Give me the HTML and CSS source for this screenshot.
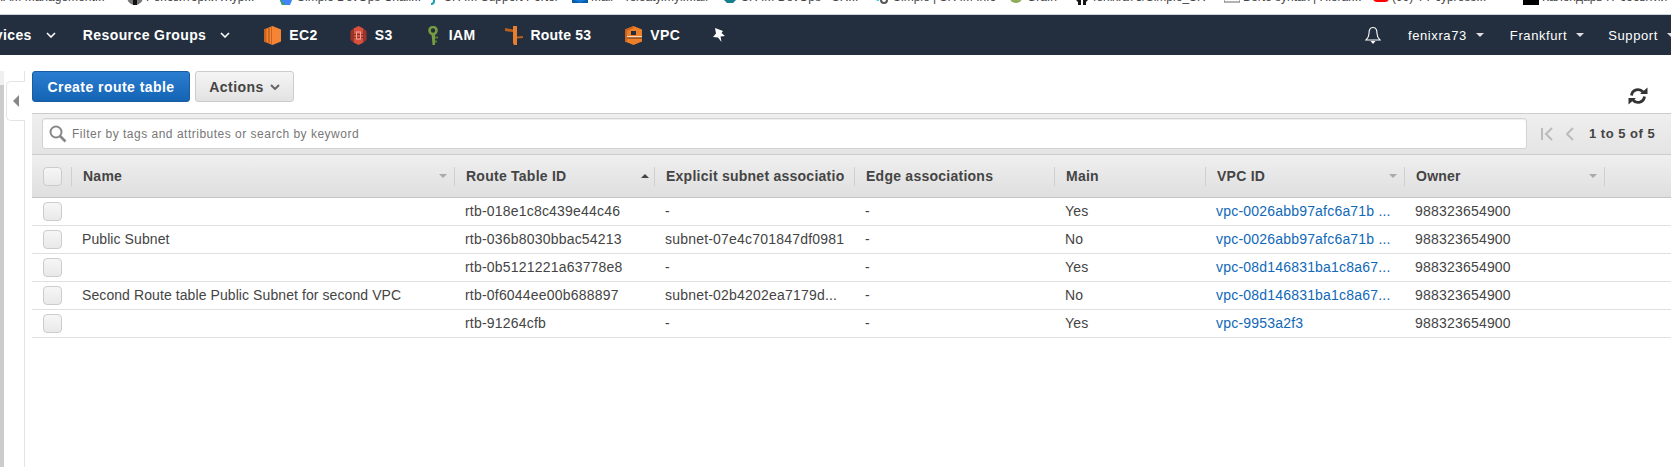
FILE: index.html
```html
<!DOCTYPE html>
<html lang="en">
<head>
<meta charset="utf-8">
<title>Route Tables</title>
<link rel="stylesheet" href="styles.css">
</head>
<body>
<div class="bookmarks">
  <div class="bm"><span class="bm-text">IAM Management...</span></div>
  <div class="bm"><svg class="bm-icon" viewBox="0 0 16 16"><circle cx="8" cy="8" r="8" fill="#777"/><path d="M8 5v11" stroke="#111" stroke-width="4"/></svg><span class="bm-text">Репозиторий Жур...</span></div>
  <div class="bm"><svg class="bm-icon" viewBox="0 0 16 16"><path d="M1 9h14l-3 7H4z" fill="#4285f4"/><path d="M1 9l3 7h3z" fill="#34a853"/></svg><span class="bm-text">Simple DevOps Chall...</span></div>
  <div class="bm"><svg class="bm-icon" viewBox="0 0 16 16"><path d="M9 2v10q0 3-3 3" fill="none" stroke="#1a9fb5" stroke-width="2"/></svg><span class="bm-text">SR IM Support Porter</span></div>
  <div class="bm"><svg class="bm-icon" viewBox="0 0 16 16"><rect y="1" width="16" height="13" fill="#0f78d4"/><path d="M0 10l8 4 8-4v4H0z" fill="#0b5aa8"/></svg><span class="bm-text">Mail - Teleaty.myl.Mail</span></div>
  <div class="bm"><svg class="bm-icon" viewBox="0 0 16 16"><path d="M0 0h16v9l-5 5H5l-5-5z" fill="#14808c"/></svg><span class="bm-text">SR IM DevOps - SR...</span></div>
  <div class="bm"><svg class="bm-icon" viewBox="0 0 16 16"><circle cx="10" cy="11" r="3" fill="none" stroke="#555" stroke-width="2"/><path d="M0 8q2 3 5 3" stroke="#39bcd6" stroke-width="2" fill="none"/></svg><span class="bm-text">Simple | SR IM Info</span></div>
  <div class="bm"><svg class="bm-icon" viewBox="0 0 16 16"><path d="M1 4h14q0 10-7 10T1 4z" fill="#8fae5d"/></svg><span class="bm-text">Grafn</span></div>
  <div class="bm"><svg class="bm-icon" viewBox="0 0 16 16"><path d="M1 6h14q0 5-3 7v3H9V8H7v8H4v-3Q1 11 1 6z" fill="#151515"/></svg><span class="bm-text">fenixra73/Simple_SR</span></div>
  <div class="bm"><svg class="bm-icon" viewBox="0 0 16 16"><path d="M0 2v11h16V2" fill="none" stroke="#666" stroke-width="1"/></svg><span class="bm-text">Berte syntax | Hierar...</span></div>
  <div class="bm"><svg class="bm-icon" viewBox="0 0 16 16"><rect y="0" width="16" height="13" rx="4" fill="#f00"/></svg><span class="bm-text">(99) YT cypress...</span></div>
  <div class="bm"><svg class="bm-icon" viewBox="0 0 16 16"><rect width="16" height="16" fill="#000"/></svg><span class="bm-text">Календарь IT-событий</span></div>
</div>

<nav class="nav">
  <div class="nav-main">
    <span class="nav-item nav-services">Services<svg class="chev" viewBox="0 0 10 6"><path d="M1 1l4 4 4-4" fill="none" stroke="#fff" stroke-width="1.6"/></svg></span>
    <span class="nav-item nav-groups">Resource Groups<svg class="chev" viewBox="0 0 10 6"><path d="M1 1l4 4 4-4" fill="none" stroke="#fff" stroke-width="1.6"/></svg></span>
    <span class="nav-item nav-ec2">
      <svg class="svc" viewBox="0 0 17 19"><path d="M8.500 0L17 3.500v12L8.500 19 0 15.500v-12z" fill="#f58534"/><path d="M0 3.500L2.500 2.500v14L0 15.500zM4 2l1.800-.8v16.600L4 17zM7 .7L8 .2v18.600l-1-.5z" fill="#c9641e"/></svg>EC2</span>
    <span class="nav-item nav-s3">
      <svg class="svc" viewBox="0 0 16 19"><path d="M3 2.500L8 0l5 2.500V16.500L8 19l-5-2.500z" fill="#d9503f"/><path d="M0 5l3-2.500v14L0 14zM13 2.500L16 5v9l-3 2.500z" fill="#9c3527"/><path d="M3 8h10v1H3zM3 11h10v1H3z" fill="#8c3123"/><rect x="6" y="6" width="4" height="7" fill="none" stroke="#f0a79d" stroke-width="1"/></svg>S3</span>
    <span class="nav-item nav-iam">
      <svg class="svc svc-key" viewBox="0 0 12 19"><circle cx="6" cy="4.500" r="3.500" fill="none" stroke="#759c3e" stroke-width="2.600"/><path d="M4.500 7.500h3.500v11.500H5.500z" fill="#759c3e"/><path d="M8 10.500h3v2H8zM8 14.500h2v2H8z" fill="#5b7a2f"/></svg>IAM</span>
    <span class="nav-item nav-r53">
      <svg class="svc svc-route" viewBox="0 0 18 19"><path d="M8 0h4v19H9L8 17z" fill="#e97f2e"/><path d="M0 2l8 1.500v2.500L0 5zM12 10.500l6-.5v2l-6 .5z" fill="#b85f1f"/></svg>Route 53</span>
    <span class="nav-item nav-vpc">
      <svg class="svc" viewBox="0 0 17 19"><path d="M8.500 0L17 3.500v12L8.500 19 0 15.500v-12z" fill="#ee7f2a"/><path d="M0 10h17v1.500H0z" fill="#fbd9b8"/><path d="M0 12h17" stroke="#5a3116"/><path d="M6 9V5h5v4" fill="#232f3e"/><path d="M0 3.500L8.500 0v2L2 5v10.300L0 15.500z" fill="#c9641e"/></svg>VPC</span>
    <svg class="pin" viewBox="0 0 12 14"><path d="M2 0l8 3-1.500 2L12 8 7.500 8.500 8.500 14 5 9.500 0 9 3 5.500z" fill="#fff"/></svg>
  </div>
  <div class="nav-right">
    <svg class="bell" viewBox="0 0 16 18"><path d="M8 1.500C4.500 1.500 4 4.500 4 7.500c0 3-1 4.500-3 6.500h14c-2-2-3-3.500-3-6.500 0-3-.5-6-4-6z" fill="none" stroke="#fff" stroke-width="1.100"/><path d="M5.500 15h5L8 18z" fill="#fff"/></svg>
    <span class="nav-link nav-user">fenixra73<i class="caret"></i></span>
    <span class="nav-link nav-region">Frankfurt<i class="caret"></i></span>
    <span class="nav-link nav-support">Support<i class="caret"></i></span>
  </div>
</nav>

<div class="page">
  <aside class="rail">
    <div class="strip"></div>
    <div class="tab"><i class="tab-arrow"></i></div>
  </aside>
  <main class="content">
    <div class="actions">
      <button class="btn btn-primary" type="button">Create route table</button>
      <button class="btn btn-default" type="button">Actions<svg class="btn-chev" viewBox="0 0 10 6"><path d="M1 1l4 4 4-4" fill="none" stroke="#666" stroke-width="2"/></svg></button>
      <svg class="refresh" viewBox="0 0 20 18"><path d="M3.500 8.500A6.500 6.500 0 0 1 15 5" fill="none" stroke="#333" stroke-width="2.800"/><path d="M12 7h7.500V.5z" fill="#333"/><path d="M16.500 9.500A6.500 6.500 0 0 1 5 13" fill="none" stroke="#333" stroke-width="2.800"/><path d="M8 11H.5v6.500z" fill="#333"/></svg>
    </div>
    <div class="filter-bar">
      <div class="search">
        <svg class="search-icon" viewBox="0 0 18 18"><circle cx="7" cy="7" r="5.500" fill="none" stroke="#888" stroke-width="2"/><path d="M11 11l5.500 5.500" stroke="#888" stroke-width="2.600"/></svg>
        <span class="search-text">Filter by tags and attributes or search by keyword</span>
      </div>
      <div class="pager">
        <svg class="pager-icon" viewBox="0 0 12 14"><path d="M1 1v12M11 1L5 7l6 6" fill="none" stroke="#bbb" stroke-width="2"/></svg>
        <svg class="pager-icon pager-prev" viewBox="0 0 8 14"><path d="M7 1L1 7l6 6" fill="none" stroke="#bbb" stroke-width="2"/></svg>
        <span class="pager-text">1 to 5 of 5</span>
      </div>
    </div>
    <table class="grid">
      <thead>
        <tr>
          <th class="c-check"><div class="th-in th-check"><span class="box"></span></div></th>
          <th class="c-name"><div class="th-in"><span>Name</span><i class="sort"></i></div></th>
          <th class="c-id"><div class="th-in"><span>Route Table ID</span><i class="sort sort-up"></i></div></th>
          <th class="c-id"><div class="th-in"><span>Explicit subnet associatio</span></div></th>
          <th class="c-id"><div class="th-in"><span>Edge associations</span></div></th>
          <th class="c-main"><div class="th-in"><span>Main</span></div></th>
          <th class="c-vpc"><div class="th-in"><span>VPC ID</span><i class="sort"></i></div></th>
          <th class="c-id"><div class="th-in"><span>Owner</span><i class="sort"></i></div></th>
          <th class="c-rest"></th>
        </tr>
      </thead>
      <tbody>
        <tr><td class="cell-check"><span class="box"></span></td><td class="cell-name"></td><td>rtb-018e1c8c439e44c46</td><td>-</td><td>-</td><td>Yes</td><td><a class="link">vpc-0026abb97afc6a71b ...</a></td><td>988323654900</td><td></td></tr>
        <tr><td class="cell-check"><span class="box"></span></td><td class="cell-name">Public Subnet</td><td>rtb-036b8030bbac54213</td><td>subnet-07e4c701847df0981</td><td>-</td><td>No</td><td><a class="link">vpc-0026abb97afc6a71b ...</a></td><td>988323654900</td><td></td></tr>
        <tr><td class="cell-check"><span class="box"></span></td><td class="cell-name"></td><td>rtb-0b5121221a63778e8</td><td>-</td><td>-</td><td>Yes</td><td><a class="link">vpc-08d146831ba1c8a67...</a></td><td>988323654900</td><td></td></tr>
        <tr><td class="cell-check"><span class="box"></span></td><td class="cell-name">Second Route table Public Subnet for second VPC</td><td>rtb-0f6044ee00b688897</td><td>subnet-02b4202ea7179d...</td><td>-</td><td>No</td><td><a class="link">vpc-08d146831ba1c8a67...</a></td><td>988323654900</td><td></td></tr>
        <tr><td class="cell-check"><span class="box"></span></td><td class="cell-name"></td><td>rtb-91264cfb</td><td>-</td><td>-</td><td>Yes</td><td><a class="link">vpc-9953a2f3</a></td><td>988323654900</td><td></td></tr>
      </tbody>
    </table>
  </main>
</div>
</body>
</html>
```
FILE: styles.css
```css
* { box-sizing: border-box; }
html, body { margin: 0; height: 100%; overflow: hidden; background: #fff; }
body { font-family: "Liberation Sans", Arial, sans-serif; font-size: 14px; color: #444; display: flex; flex-direction: column; }

/* bookmark strip, clipped by the screenshot's top edge */
.bookmarks {
  height: 15px; border-bottom: 1px solid #cbd2d8; overflow: hidden; flex: none;
  display: grid; align-items: start;
  grid-template-columns: 127px 151px 147px 147px 150px 152px 134px 66px 150px 149px 150px 1fr;
}
.bm { display: flex; align-items: flex-end; gap: 3px; height: 16px; margin-top: -11px; overflow: hidden; white-space: nowrap; }
.bm-icon { width: 16px; height: 16px; flex: none; }
.bm-text { font-size: 12px; line-height: 16px; color: #444; }

/* service bar */
.nav { height: 40px; flex: none; background: #232f3e; color: #fff; display: flex; align-items: center; overflow: hidden; }
.nav-main { display: flex; align-items: center; height: 100%; }
.nav-item { display: flex; align-items: center; font-weight: 700; letter-spacing: .4px; white-space: nowrap; }
.chev { width: 10px; height: 6px; margin-left: 14px; flex: none; }
.svc { width: 17px; height: 19px; margin-right: 8px; flex: none; }
.svc-key { width: 12px; margin-right: 10px; }
.svc-route { width: 18px; }
.nav-services { margin-left: -29px; }
.nav-groups { margin-left: 27px; }
.nav-ec2 { margin-left: 34px; }
.nav-s3 { margin-left: 32px; }
.nav-iam { margin-left: 34px; }
.nav-r53 { margin-left: 29px; letter-spacing: .2px; }
.nav-vpc { margin-left: 34px; }
.pin { width: 12px; height: 14px; margin-left: 33px; }
.nav-right { margin-left: auto; display: flex; align-items: center; margin-right: -4px; }
.bell { width: 16px; height: 18px; margin-right: 27px; }
.nav-link { font-size: 13px; letter-spacing: .6px; display: flex; align-items: center; white-space: nowrap; }
.nav-user { margin-right: 26px; }
.nav-region { margin-right: 24px; }
.caret { width: 0; height: 0; margin-left: 9px; border: 4px solid transparent; border-top: 4px solid #ddd; border-bottom: 0; }

/* page */
.page { flex: 1; display: flex; min-height: 0; }
.rail { width: 32px; flex: none; position: relative; padding-top: 16px; }
.strip { width: 4px; height: 100%; background: linear-gradient(#f0f0f0 0, #f0f0f0 14px, #ccc 14px); }
.rail::after { content: ""; position: absolute; left: 24px; top: 16px; bottom: 0; width: 1px; background: #e3e3e3; }
.tab { position: absolute; left: 6px; top: 26px; width: 19px; height: 40px; background: #fff; border: 1px solid #e3e3e3; border-right: 0; border-radius: 5px 0 0 5px; z-index: 1; display: flex; align-items: center; justify-content: center; }
.tab-arrow { border: 6px solid transparent; border-right: 6px solid #888; border-left: 0; }
.content { flex: 1; min-width: 0; display: flex; flex-direction: column; padding-top: 16px; }

.actions { height: 42px; flex: none; display: flex; align-items: flex-start; gap: 5px; }
.btn { height: 31px; border-radius: 3px; font: 700 14px "Liberation Sans", Arial, sans-serif; letter-spacing: .45px; display: flex; align-items: center; padding: 0; }
.btn-primary { width: 158px; justify-content: center; color: #fff; border: 1px solid #1a5c9e; background: linear-gradient(#2b7dd1, #1464b4); }
.btn-default { width: 99px; justify-content: center; color: #444; border: 1px solid #ccc; background: linear-gradient(#f5f5f5, #e2e2e2); }
.btn-chev { width: 10px; height: 6px; margin-left: 6px; }
.refresh { width: 20px; height: 18px; margin-left: auto; margin-right: 23px; margin-top: 16px; }

.filter-bar { height: 42px; flex: none; display: flex; align-items: flex-start; padding: 4px 0 0 10px; background: linear-gradient(#efefef, #e4e4e4); border-top: 1px solid #ccc; border-bottom: 1px solid #ccc; }
.search { width: 1485px; height: 31px; background: #fff; border: 1px solid #d3d3d3; border-radius: 3px; display: flex; align-items: center; padding-left: 6px; box-shadow: inset 0 1px 1px #eee; }
.search-icon { width: 18px; height: 18px; flex: none; margin-right: 5px; }
.search-text { font-size: 12px; letter-spacing: .5px; color: #777; padding-top: 1px; }
.pager { display: flex; align-items: center; height: 31px; padding-left: 14px; }
.pager-icon { width: 12px; height: 14px; }
.pager-prev { width: 8px; margin-left: 13px; }
.pager-text { font-size: 13px; font-weight: 700; color: #444; margin-left: 15px; letter-spacing: .5px; white-space: nowrap; }

/* table */
.grid { width: 100%; table-layout: fixed; border-collapse: separate; border-spacing: 0; }
.c-check { width: 40px; }
.c-name { width: 383px; }
.c-id { width: 200px; }
.c-vpc { width: 199px; }
.c-main { width: 151px; }
.c-rest { width: auto; }
.grid th { height: 43px; padding: 0; background: linear-gradient(#efefef, #dfdfdf); border-bottom: 1px solid #c4c4c4; text-align: left; font-size: 14px; font-weight: 700; color: #444; letter-spacing: .25px; }
.th-in { height: 19px; display: flex; align-items: center; justify-content: space-between; padding: 0 7px 0 11px; border-right: 1px solid #cfcfcf; white-space: nowrap; overflow: hidden; }
.th-check { justify-content: flex-start; padding: 0 0 0 11px; }
.sort { width: 0; height: 0; flex: none; border: 4px solid transparent; border-top: 4px solid #aaa; border-bottom: 0; }
.sort-up { border-top: 0; border-bottom: 4px solid #444; margin-right: -2px; }
.box { display: block; width: 19px; height: 19px; border: 1px solid #ccc; border-radius: 4px; background: linear-gradient(#f6f6f6, #e9e9e9); }
.grid td { height: 28px; padding: 0 0 2px 10px; border-bottom: 1px solid #e0e0e0; font-size: 14px; letter-spacing: .2px; color: #444; white-space: nowrap; overflow: hidden; }
.grid td.cell-check { padding: 0 0 0 11px; }
.grid td.cell-name { letter-spacing: .085px; }
.link { color: #0f68b8; }
```
